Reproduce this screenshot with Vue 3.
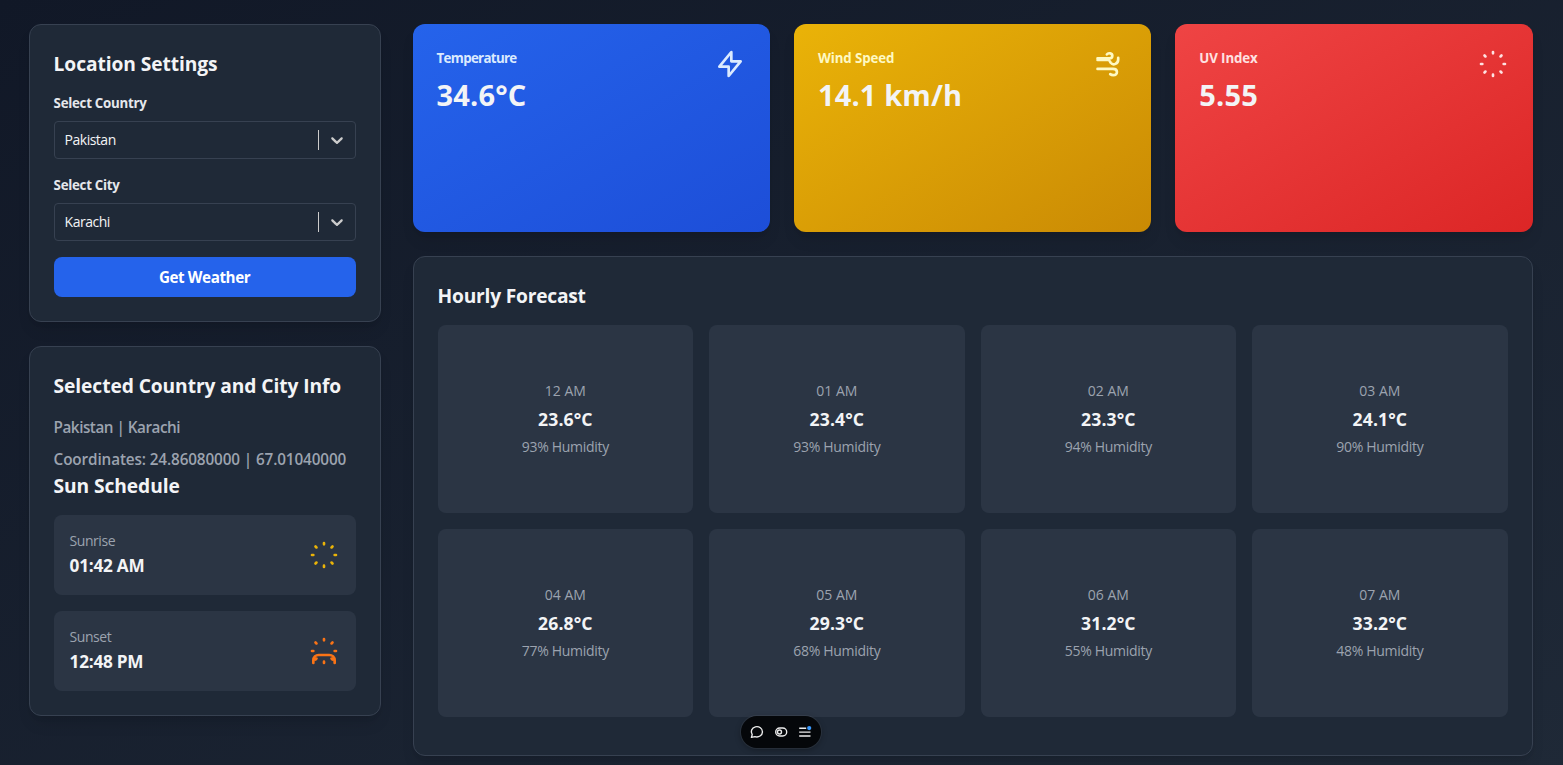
<script setup>
const selects = [
  { label: 'Select Country', value: 'Pakistan' },
  { label: 'Select City', value: 'Karachi' },
]
const rays =
  'M12 3v1m0 16v1m9-9h-1M4 12H3m15.364 6.364l-.707-.707M6.343 6.343l-.707-.707m12.728 0l-.707.707M6.343 17.657l-.707.707'
const bolt = 'M13 10V3L4 14h7v7l9-11h-7z'
const wind =
  'M1.9 7.8H10.8M8.9 4.8C9.8 3.4 13.1 3.7 13 5.9C13 7.2 12.1 7.8 10.8 7.8M1.9 9H9.8C11 9 11.2 10.2 11.8 11.1C13.6 13.4 17.5 11.9 17.4 8.4V7.3M1.9 15.7H13.5C17.4 15.7 17.4 20.4 13.7 20.4C12.7 20.4 12 20.1 11.4 19.6'
const stats = [
  { label: 'Temperature', value: '34.6°C', tone: 'blue', icon: bolt },
  { label: 'Wind Speed', value: '14.1 km/h', tone: 'yellow', icon: wind },
  { label: 'UV Index', value: '5.55', tone: 'red', icon: rays },
]
const sun = [
  { label: 'Sunrise', value: '01:42 AM', tone: 'gold', icon: rays },
  { label: 'Sunset', value: '12:48 PM', tone: 'orange', icon: rays + 'M20 21v-2a4 4 0 00-4-4H8a4 4 0 00-4 4v2' },
]
const hours = [
  ['12 AM', '23.6', 93],
  ['01 AM', '23.4', 93],
  ['02 AM', '23.3', 94],
  ['03 AM', '24.1', 90],
  ['04 AM', '26.8', 77],
  ['05 AM', '29.3', 68],
  ['06 AM', '31.2', 55],
  ['07 AM', '33.2', 48],
]
</script>

<template>
  <div class="page">
    <main class="layout">
      <aside class="side">
        <section class="panel">
          <h2 class="title">Location Settings</h2>
          <div v-for="s in selects" :key="s.label" class="field">
            <label class="label">{{ s.label }}</label>
            <div class="select">
              <span class="chosen">{{ s.value }}</span>
              <span class="bar"></span>
              <svg class="chevron" viewBox="0 0 20 20" width="20" height="20">
                <path d="M4.516 7.548c0.436-0.446 1.043-0.481 1.576 0l3.908 3.747 3.908-3.747c0.533-0.481 1.141-0.446 1.574 0 0.436 0.445 0.408 1.197 0 1.615-0.406 0.418-4.695 4.502-4.695 4.502-0.217 0.223-0.502 0.335-0.787 0.335s-0.57-0.112-0.789-0.335c0 0-4.287-4.084-4.695-4.502s-0.436-1.17 0-1.615z" />
              </svg>
            </div>
          </div>
          <button class="button"><span>Get Weather</span></button>
        </section>

        <section class="panel">
          <h2 class="title">Selected Country and City Info</h2>
          <p class="place">Pakistan | Karachi</p>
          <p class="coords">Coordinates: 24.86080000 | 67.01040000</p>
          <h2 class="title">Sun Schedule</h2>
          <div class="sun-list">
            <div v-for="s in sun" :key="s.label" class="sun-row">
              <div>
                <p class="sun-label">{{ s.label }}</p>
                <p class="sun-time">{{ s.value }}</p>
              </div>
              <svg class="icon" :class="s.tone" viewBox="0 0 24 24"><path :d="s.icon" /></svg>
            </div>
          </div>
        </section>
      </aside>

      <div class="content">
        <div class="stats">
          <section v-for="s in stats" :key="s.label" class="stat" :class="s.tone">
            <div>
              <p class="stat-label">{{ s.label }}</p>
              <p class="stat-value">{{ s.value }}</p>
            </div>
            <svg class="icon" viewBox="0 0 24 24"><path :d="s.icon" /></svg>
          </section>
        </div>
        <section class="panel forecast">
          <h2 class="title">Hourly Forecast</h2>
          <div class="hours">
            <div v-for="h in hours" :key="h[0]" class="hour">
              <p class="hour-time">{{ h[0] }}</p>
              <p class="hour-temp">{{ h[1] }}°C</p>
              <p class="hour-hum">{{ h[2] }}% Humidity</p>
            </div>
          </div>
        </section>
      </div>
    </main>

    <div class="toolbar">
      <svg viewBox="0 0 16 16" width="16" height="16">
        <path d="M2.4 13.4L3.2 10.6A5.6 5.1 0 1 1 6 12.6Z" />
      </svg>
      <svg viewBox="0 0 16 16" width="16" height="16">
        <rect x="2.7" y="4" width="11" height="8" rx="4" />
        <circle cx="6.5" cy="8" r="2" />
      </svg>
      <svg viewBox="0 0 16 16" width="16" height="16">
        <path d="M2.2 4.3h7M2.2 8.1h11.3M2.2 12h11.3" />
        <circle class="badge" cx="12.2" cy="4.1" r="2.1" />
      </svg>
    </div>
  </div>
</template>

<style>
body {
  overflow: hidden;
  background: #111827;
}
</style>

<style scoped>
* {
  box-sizing: border-box;
  margin: 0;
}
.page {
  height: 780px;
  padding: 24px 28.6px;
  background: linear-gradient(to bottom right, #111827, #1f2937);
  font-family: "Open Sans", "Noto Sans", sans-serif;
  color: #f3f4f6;
}
.layout {
  display: grid;
  grid-template-columns: 352px 1120px;
  gap: 32px;
}
.side,
.content {
  display: flex;
  flex-direction: column;
  gap: 24px;
}
.panel {
  padding: 24px;
  border: 1px solid #374151;
  border-radius: 12px;
  background: #1f2937;
  box-shadow: 0 10px 15px -3px rgba(0, 0, 0, 0.1), 0 4px 6px -4px rgba(0, 0, 0, 0.1);
}
.title {
  margin-bottom: 15px;
  padding-top: 1px;
  font-size: 19.2px;
  line-height: 28px;
  font-weight: 700;
  letter-spacing: -0.08px;
  white-space: nowrap;
}
.field {
  margin-bottom: 16px;
}
.label {
  display: block;
  margin-bottom: 8px;
  font-size: 13.3px;
  line-height: 20px;
  font-weight: 700;
  letter-spacing: -0.27px;
  color: #e5e7eb;
}
.select {
  display: flex;
  align-items: center;
  height: 38px;
  padding-left: 10px;
  border: 1px solid #374151;
  border-radius: 4px;
}
.chosen {
  flex: 1;
  font-size: 14px;
  line-height: 20px;
  letter-spacing: -0.5px;
}
.bar {
  width: 1px;
  height: 20px;
  background: #ccc;
}
.chevron {
  margin: 0 8px;
  fill: #ccc;
}
.button {
  display: block;
  width: 100%;
  height: 40px;
  padding: 0;
  border: 0;
  border-radius: 8px;
  background: #2563eb;
  color: #fff;
  font: 700 15.2px/24px "Open Sans", "Noto Sans", sans-serif;
  letter-spacing: -0.4px;
}
.place,
.coords {
  font-size: 15.3px;
  line-height: 24px;
  font-weight: 600;
  color: #9ca3af;
  white-space: nowrap;
}
.place {
  margin-bottom: 8px;
  letter-spacing: -0.5px;
}
.coords {
  letter-spacing: -0.13px;
}
.sun-list {
  display: grid;
  gap: 16px;
}
.sun-row {
  display: flex;
  align-items: center;
  justify-content: space-between;
  height: 80px;
  padding: 16px;
  border-radius: 8px;
  background: rgba(55, 65, 81, 0.5);
}
.sun-label {
  font-size: 14px;
  line-height: 20px;
  letter-spacing: -0.45px;
  color: #9ca3af;
}
.sun-time {
  padding-top: 1px;
  margin-bottom: -1px;
  font-size: 17.2px;
  line-height: 28px;
  font-weight: 700;
  letter-spacing: -0.25px;
}
.icon {
  width: 32px;
  height: 32px;
  fill: none;
  stroke: currentColor;
  stroke-width: 2;
  stroke-linecap: round;
  stroke-linejoin: round;
}
.gold {
  color: #eab308;
}
.orange {
  color: #f97316;
}
.stats {
  display: grid;
  grid-template-columns: repeat(3, 1fr);
  gap: 24px;
  height: 208px;
}
.stat {
  display: flex;
  justify-content: space-between;
  align-items: flex-start;
  padding: 24px;
  border-radius: 12px;
  box-shadow: 0 10px 15px -3px rgba(0, 0, 0, 0.1), 0 4px 6px -4px rgba(0, 0, 0, 0.1);
}
.blue {
  background: linear-gradient(to bottom right, #2563eb, #1d4ed8);
  color: #dbeafe;
}
.yellow {
  background: linear-gradient(to bottom right, #eab308, #ca8a04);
  color: #fef9c3;
}
.red {
  background: linear-gradient(to bottom right, #ef4444, #dc2626);
  color: #fee2e2;
}
.stat-label {
  margin-bottom: 9px;
  font-size: 13.3px;
  line-height: 20px;
  font-weight: 700;
  letter-spacing: -0.1px;
}
.blue .stat-label {
  letter-spacing: -0.68px;
}
.stat-value {
  font-size: 29px;
  line-height: 36px;
  font-weight: 700;
  letter-spacing: 0.15px;
  color: #f3f4f6;
}
.forecast {
  height: 500px;
}
.forecast .title {
  margin-bottom: 15px;
  letter-spacing: -0.22px;
}
.hours {
  display: grid;
  grid-template-columns: repeat(4, 1fr);
  grid-auto-rows: 188px;
  gap: 16px;
}
.hour {
  display: flex;
  flex-direction: column;
  align-items: center;
  justify-content: center;
  gap: 4px;
  border-radius: 8px;
  background: rgba(55, 65, 81, 0.5);
}
.hour-time,
.hour-hum {
  font-size: 14px;
  line-height: 20px;
  color: #9ca3af;
}
.hour-hum {
  letter-spacing: -0.31px;
}
.hour-temp {
  font-size: 17.6px;
  line-height: 28px;
  font-weight: 700;
  letter-spacing: 0.1px;
}
.toolbar {
  position: fixed;
  left: 741px;
  top: 716px;
  display: flex;
  align-items: center;
  justify-content: center;
  gap: 8px;
  width: 80px;
  height: 32px;
  border-radius: 16px;
  background: #05070a;
  box-shadow: 0 0 0 1px rgba(255, 255, 255, 0.06), 0 2px 6px rgba(0, 0, 0, 0.3);
}
.toolbar svg {
  fill: none;
  stroke: #ededed;
  stroke-width: 1.4;
  stroke-linejoin: round;
}
.toolbar .badge {
  fill: #3b9bff;
  stroke: none;
}
</style>
